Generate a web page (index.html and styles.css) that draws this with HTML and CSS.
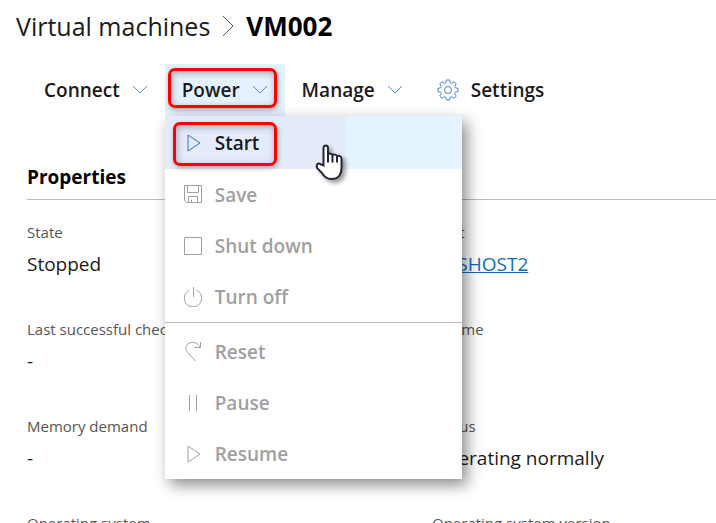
FILE: index.html
```html
<!DOCTYPE html>
<html lang="en">
<head>
<meta charset="utf-8">
<meta name="viewport" content="width=device-width, initial-scale=1">
<title>VM002</title>
<link rel="stylesheet" href="styles.css">
</head>
<body>
<header class="breadcrumb">
  <span>Virtual machines</span>
  <svg class="crumb-arrow" viewBox="0 0 12 22" aria-hidden="true"><path d="M1 1l10 10L1 21"/></svg>
  <h1>VM002</h1>
</header>
<nav class="toolbar">
  <button class="tool" type="button">Connect <svg class="chevron" viewBox="0 0 16 10" aria-hidden="true"><path d="M1 1l7 7 7-7"/></svg></button>
  <div class="dropdown">
    <button class="tool tool-open" type="button" aria-expanded="true">Power <svg class="chevron" viewBox="0 0 16 10" aria-hidden="true"><path d="M1 1l7 7 7-7"/></svg></button>
    <span class="callout callout-power"></span>
    <ul class="menu">
      <li><button class="item item-active" type="button"><svg viewBox="0 0 20 20" aria-hidden="true"><path d="M5 2v16l12-8z"/></svg>Start</button></li>
      <li><button class="item" type="button" disabled><svg viewBox="0 0 20 20" aria-hidden="true"><path d="M1.500 .5h17v17H3.500l-2-2zM4.500 .5v7h11v-7M5.500 17.500v-6h9v6M8.500 17.500v-3"/></svg>Save</button></li>
      <li><button class="item" type="button" disabled><svg viewBox="0 0 20 20" aria-hidden="true"><path d="M1.500 1.500h17v17h-17z"/></svg>Shut down</button></li>
      <li><button class="item" type="button" disabled><svg viewBox="0 0 20 20" aria-hidden="true"><path d="M10.500 0v10M6.500 3.200a8.700 8.700 0 1 0 7 0"/></svg>Turn off</button></li>
      <li class="divided"><button class="item" type="button" disabled><svg viewBox="0 0 20 20" aria-hidden="true"><path d="M17.500 0v5.500h-6M17 5C14-1 6-1 3.500 3.500c-1.500 3-.5 5.500 1.500 7.500l7.500 8"/></svg>Reset</button></li>
      <li><button class="item" type="button" disabled><svg viewBox="0 0 20 20" aria-hidden="true"><path d="M6.500 2v16M13.500 2v16"/></svg>Pause</button></li>
      <li><button class="item" type="button" disabled><svg viewBox="0 0 20 20" aria-hidden="true"><path d="M5 2v16l12-8z"/></svg>Resume</button></li>
    </ul>
    <span class="callout callout-start"></span>
    <svg class="pointer" viewBox="0 0 30 38" aria-hidden="true"><path d="M8.500 21.500V4c0-3.500 4.500-3.500 4.500 0v6.500c1-1.500 4.200-1 4.500.7 1-1.200 4-.7 4.500 1 1.500-1 4.500 0 4.500 2V24c0 7-4 11-10 11-4.500 0-7.500-2.500-9.500-6L2.500 24.500c-2-3.500.5-6.500 3.500-4z"/><path class="fingers" d="M13 10v8.500M17.500 11.500v7M22 12.500v6"/></svg>
  </div>
  <button class="tool" type="button">Manage <svg class="chevron" viewBox="0 0 16 10" aria-hidden="true"><path d="M1 1l7 7 7-7"/></svg></button>
  <button class="tool" type="button"><svg class="gear" viewBox="0 0 22 22" aria-hidden="true"><path d="M9.300 1h3.400l.5 2.700 1.500.6L17 2.700 19.300 5l-1.600 2.300.6 1.500 2.700.5v3.400l-2.700.5-.6 1.500 1.600 2.300-2.300 2.300-2.300-1.600-1.500.6-.5 2.700H9.300l-.5-2.700-1.500-.6L5 19.300 2.700 17l1.600-2.300-.6-1.500L1 12.700V9.300l2.700-.5.6-1.500L2.700 5 5 2.700l2.300 1.600 1.500-.6z"/><circle cx="11" cy="11" r="3.500"/></svg>Settings</button>
</nav>
<main class="content">
  <h2>Properties</h2>
  <dl class="properties">
    <div><dt>State</dt><dd>Stopped</dd></div>
    <div><dt>Host</dt><dd><a href="#host">HVSHOST2</a></dd></div>
    <div><dt>Last successful checkpoint</dt><dd>-</dd></div>
    <div><dt>Uptime</dt><dd></dd></div>
    <div><dt>Memory demand</dt><dd>-</dd></div>
    <div><dt>Status</dt><dd>Operating normally</dd></div>
    <div><dt>Operating system</dt><dd></dd></div>
    <div><dt>Operating system version</dt><dd></dd></div>
  </dl>
</main>
</body>
</html>
```

FILE: styles.css
```css
* { box-sizing: border-box; }

body {
  margin: 0;
  height: 100vh;
  overflow: hidden;
  background: #fff;
  color: #1a1a1a;
  font-family: "Open Sans", "Noto Sans", sans-serif;
  font-size: 19px;
}

button {
  border: 0;
  background: none;
  color: inherit;
  font: inherit;
  font-weight: 600;
}

svg {
  flex: none;
  fill: none;
  stroke: currentColor;
}

h1, h2, ul, dl, dd { margin: 0; padding: 0; }

.breadcrumb {
  display: flex;
  align-items: center;
  gap: 11px;
  padding: 8px 16px 0;
  font-size: 25px;
  line-height: 36px;
}

.breadcrumb h1 {
  color: #000;
  font-size: 26px;
  font-weight: 700;
}

.crumb-arrow {
  width: 14px;
  height: 22px;
  color: #555;
}

.toolbar {
  display: flex;
  padding: 20px 27px 0;
}

.tool {
  display: flex;
  align-items: center;
  gap: 12px;
  height: 52px;
  padding: 0 17px;
  color: #1a1a1a;
}

.tool-open { background: #e5f1fd; }

.chevron {
  width: 16px;
  height: 10px;
  color: #5f88c8;
}

.gear {
  width: 22px;
  height: 22px;
  color: #4f7fca;
}

.dropdown { position: relative; }

.menu {
  position: absolute;
  z-index: 1;
  top: 100%;
  left: 0;
  width: 297px;
  background: #fff;
  box-shadow: 5px 6px 14px rgba(0, 0, 0, 0.45);
  list-style: none;
}

.item {
  display: flex;
  align-items: center;
  gap: 12px;
  width: 100%;
  height: 51px;
  padding: 0 18px;
  color: #a0a0a0;
}

.item svg {
  width: 20px;
  height: 20px;
}

.item-active {
  height: 53px;
  background: linear-gradient(90deg, #e4ecfc 181px, #e5f2ff 181px);
  color: #1a1a1a;
}

.item-active svg { color: #2f72cc; }

.divided {
  padding-top: 3px;
  border-top: 1px solid #bbb;
}

.callout {
  position: absolute;
  z-index: 2;
  border: 3px solid #f00;
  border-radius: 7px;
  box-shadow: 1px 2px 5px rgba(0, 0, 0, 0.3), inset 1px 2px 7px rgba(0, 0, 0, 0.3);
  pointer-events: none;
}

.callout-power { inset: 4px 8px 8px 3px; }

.callout-start {
  top: 58px;
  left: 8px;
  width: 104px;
  height: 44px;
}

.pointer {
  position: absolute;
  z-index: 3;
  top: 80px;
  left: 150px;
  width: 30px;
  height: 38px;
  fill: #fff;
  stroke: #222632;
  stroke-width: 2;
  filter: drop-shadow(3px 3px 2px rgba(0, 0, 0, 0.4));
}

.pointer .fingers { fill: none; }

.content { padding: 45px 0 0 27px; }

.content h2 {
  padding-bottom: 6px;
  border-bottom: 1px solid #bbb;
  color: #000;
  font-size: 19px;
  line-height: 32px;
}

.properties {
  display: grid;
  grid-template-columns: 405fr 284fr;
  row-gap: 33px;
  padding-top: 20px;
}

.properties dt {
  color: #555;
  font-size: 15px;
  line-height: 24px;
}

.properties dd {
  min-height: 40px;
  line-height: 40px;
}

.properties a { color: #0f6cbd; }
```
